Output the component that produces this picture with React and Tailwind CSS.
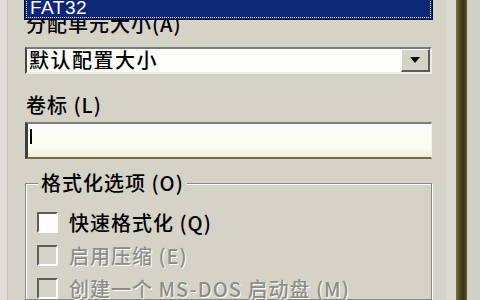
export default function App() {
  const disabled = "text-[#8e8d86] [text-shadow:1px_1px_0_#ffffff]";
  return (
    <div className="w-[480px] h-[300px] overflow-hidden flex bg-[#d5d3c8] text-black font-['Noto_Sans_CJK_SC','Noto_Sans',sans-serif] font-medium">
      <div className="w-[8px] shrink-0 bg-[#dfddd5] border-r border-[#c4c2b8]" />
      <div className="relative w-[407px] ml-[17px] shrink-0 flex flex-col">
        {/* selected dropdown list item overlaying the label */}
        <div className="absolute -top-[5px] -left-[1px] -right-[1px] h-[25px] bg-[#0b2776] border border-[#08082a] p-[1px] flex z-10">
          <div className="flex-1 border border-dotted border-white flex items-end pl-[3px]">
            <span className="text-white text-[19px] leading-[19px] font-normal font-['Liberation_Sans',sans-serif] tracking-[0.5px]">FAT32</span>
          </div>
        </div>
        <div className="mt-[14px] text-[20px] leading-[20px] tracking-[1px] pl-[1px]">分配单元大小(A)</div>
        {/* combobox */}
        <div className="mt-[13px] h-[31px] flex border-2 border-t-[#7b7b78] border-l-[#454543] border-r-[#ecebe4] border-b-[#ecebe4] bg-[#fdfdfa]">
          <div className="flex-1 flex items-center pl-[2px] text-[20px] leading-[22px] tracking-[1.5px]">默认配置大小</div>
          <div className="w-[29px] h-full bg-[#d5d3c8] border-t border-l border-t-white border-l-white border-r-2 border-b-2 border-r-[#5c5c5a] border-b-[#5c5c5a] flex items-center justify-center">
            <svg width="10" height="6" viewBox="0 0 10 6">
              <path d="M0 0H10L5 6Z" fill="#000" />
            </svg>
          </div>
        </div>
        <div className="mt-[21px] text-[20px] leading-[20px] tracking-[1px] pl-[1px]">卷标 (L)</div>
        {/* text input */}
        <div className="mt-[7px] h-[43px] border-t-2 border-t-[#7d7d7a] border-l-[3px] border-l-[#3f3f3d] border-r border-r-[#f4f4ec] border-b-2 border-b-[#6c6b42] bg-[linear-gradient(to_bottom,#fdfdf8_0%,#fbfbf4_70%,#eeeed2_100%)]">
          <div className="ml-[2px] mt-[5px] w-[2px] h-[15px] bg-black" />
        </div>
        {/* group box */}
        <div className="relative mt-[24px] flex-1 border border-[#878680] shadow-[inset_1px_1px_0_#ffffff,1px_1px_0_#ffffff] pt-[28px] pl-[11px] flex flex-col gap-[12px]">
          <div className="absolute -top-[11px] left-[12px] px-[3px] bg-[#d5d3c8] text-[20px] leading-[20px] tracking-[1px]">格式化选项 (O)</div>
          <div className="flex items-center gap-[11px]">
            <div className="w-[21px] h-[21px] shrink-0 border-2 border-t-[#5e5e5c] border-l-[#5e5e5c] border-b-white border-r-white bg-white" />
            <span className="text-[20px] leading-[21px] tracking-[1px]">快速格式化 (Q)</span>
          </div>
          <div className="flex items-center gap-[11px]">
            <div className="w-[21px] h-[21px] shrink-0 border-2 border-t-[#5e5e5c] border-l-[#5e5e5c] border-b-white border-r-white bg-[#d5d3c8]" />
            <span className={"text-[20px] leading-[21px] tracking-[1px] " + disabled}>启用压缩 (E)</span>
          </div>
          <div className="flex items-center gap-[11px]">
            <div className="w-[21px] h-[21px] shrink-0 border-2 border-t-[#5e5e5c] border-l-[#5e5e5c] border-b-white border-r-white bg-[#d5d3c8]" />
            <span className={"text-[20px] leading-[21px] tracking-[1px] whitespace-nowrap " + disabled}>创建一个 MS-DOS 启动盘 (M)</span>
          </div>
        </div>
      </div>
      <div className="w-[14px] shrink-0" />
      <div className="w-[10px] shrink-0 bg-[#dcdbd2]" />
      <div className="w-[11px] shrink-0 bg-[linear-gradient(to_right,#77774a,#4a4420_40%,#3a3312_70%,#5c5a3a)]" />
      <div className="flex-1 bg-[#d0d0c7]" />
    </div>
  );
}
